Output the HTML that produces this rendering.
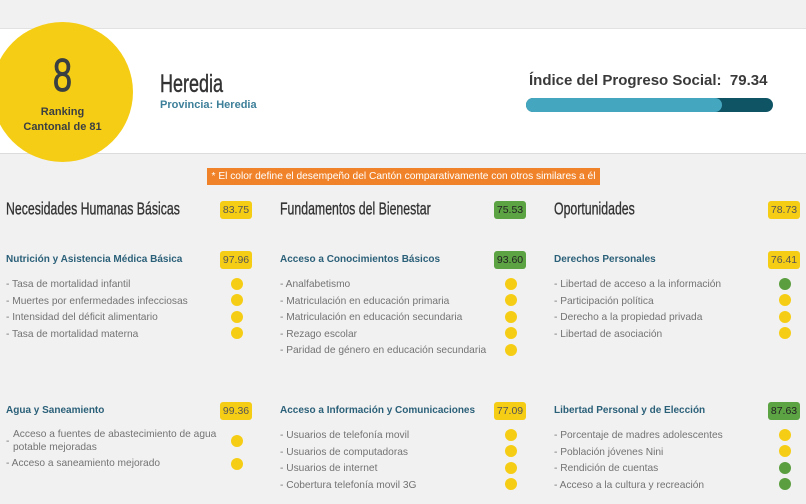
<!DOCTYPE html><html><head><meta charset="utf-8"><style>
*{margin:0;padding:0;box-sizing:border-box}
body{width:806px;height:504px;background:#f1f1f1;font-family:"Liberation Sans",sans-serif;position:relative;overflow:hidden}
.a{position:absolute}
.hdr{left:0;top:28px;width:806px;height:126px;background:#fff;border-top:1px solid #e2e2e2;border-bottom:1px solid #dcdcdc}
.circ{left:-8px;top:22px;width:141px;height:140px;border-radius:50%;background:#f6cd15;text-align:center;color:#3a3f42}
.h2{font-size:16px;color:#333;transform:scale(0.77,1.08);transform-origin:left center;white-space:nowrap;-webkit-text-stroke:0.3px #333}
.b{width:32px;height:18px;border-radius:3px;background:#f6cd15;color:#555;font-size:10.5px;text-align:center;line-height:18px}
.g{background:#5ca344;color:#222}
.st{font-size:10px;font-weight:bold;color:#2b6079}
.it{font-size:10.2px;color:#737373;line-height:16.5px}
.d{width:12px;height:12px;border-radius:50%;background:#f6cd15}
.dg{background:#5b9e3f}
</style></head><body>
<div class="a hdr"></div>
<div class="a circ"><div style="font-size:46px;margin-top:30px;line-height:46px;transform:scaleX(0.75);-webkit-text-stroke:0.8px #3a3f42">8</div><div style="font-size:11px;font-weight:bold;line-height:15px;margin-top:7px">Ranking<br>Cantonal de 81</div></div>
<div class="a" style="left:160px;top:70px;font-size:24px;color:#333;transform:scale(0.75,1.05);transform-origin:left top;-webkit-text-stroke:0.4px #333">Heredia</div>
<div class="a" style="left:160px;top:99px;font-size:11px;font-weight:bold;color:#3d7f99">Provincia: Heredia</div>
<div class="a" style="left:529px;top:72px;font-size:15px;font-weight:bold;color:#3a3a3a">Índice del Progreso Social:&nbsp; 79.34</div>
<div class="a" style="left:526px;top:98px;width:247px;height:14px;border-radius:7px;background:#0e5465"><div style="width:196px;height:14px;border-radius:7px;background:#44a7bf"></div></div>
<div class="a" style="left:207px;top:168px;width:393px;height:17px;background:#f0832a;color:#fff;font-size:10.2px;line-height:17px;text-align:center;white-space:nowrap">* El color define el desempeño del Cantón comparativamente con otros similares a él</div>

<div class="a h2" style="left:6px;top:201px">Necesidades Humanas Básicas</div>
<div class="a b" style="left:220px;top:201px">83.75</div>
<div class="a h2" style="left:280px;top:201px">Fundamentos del Bienestar</div>
<div class="a b g" style="left:494px;top:201px">75.53</div>
<div class="a h2" style="left:554px;top:201px">Oportunidades</div>
<div class="a b" style="left:768px;top:201px">78.73</div>

<div class="a st" style="left:6px;top:254px">Nutrición y Asistencia Médica Básica</div>
<div class="a b" style="left:220px;top:251px">97.96</div>
<div class="a it" style="left:6px;top:277px">- Tasa de mortalidad infantil<br>- Muertes por enfermedades infecciosas<br>- Intensidad del déficit alimentario<br>- Tasa de mortalidad materna</div>
<div class="a d" style="left:231px;top:278px"></div><div class="a d" style="left:231px;top:294px"></div><div class="a d" style="left:231px;top:311px"></div><div class="a d" style="left:231px;top:327px"></div>

<div class="a st" style="left:280px;top:254px">Acceso a Conocimientos Básicos</div>
<div class="a b g" style="left:494px;top:251px">93.60</div>
<div class="a it" style="left:280px;top:277px">- Analfabetismo<br>- Matriculación en educación primaria<br>- Matriculación en educación secundaria<br>- Rezago escolar<br>- Paridad de género en educación secundaria</div>
<div class="a d" style="left:505px;top:278px"></div><div class="a d" style="left:505px;top:294px"></div><div class="a d" style="left:505px;top:311px"></div><div class="a d" style="left:505px;top:327px"></div><div class="a d" style="left:505px;top:344px"></div>

<div class="a st" style="left:554px;top:254px">Derechos Personales</div>
<div class="a b" style="left:768px;top:251px">76.41</div>
<div class="a it" style="left:554px;top:277px">- Libertad de acceso a la información<br>- Participación política<br>- Derecho a la propiedad privada<br>- Libertad de asociación</div>
<div class="a d dg" style="left:779px;top:278px"></div><div class="a d" style="left:779px;top:294px"></div><div class="a d" style="left:779px;top:311px"></div><div class="a d" style="left:779px;top:327px"></div>

<div class="a st" style="left:6px;top:405px">Agua y Saneamiento</div>
<div class="a b" style="left:220px;top:402px">99.36</div>
<div class="a it" style="left:6px;top:434px">-</div>
<div class="a it" style="left:13px;top:428px;line-height:13px;width:210px">Acceso a fuentes de abastecimiento de agua potable mejoradas</div>
<div class="a it" style="left:6px;top:456px">- Acceso a saneamiento mejorado</div>
<div class="a d" style="left:231px;top:435px"></div><div class="a d" style="left:231px;top:458px"></div>

<div class="a st" style="left:280px;top:405px">Acceso a Información y Comunicaciones</div>
<div class="a b" style="left:494px;top:402px">77.09</div>
<div class="a it" style="left:280px;top:428px">- Usuarios de telefonía movil<br>- Usuarios de computadoras<br>- Usuarios de internet<br>- Cobertura telefonía movil 3G</div>
<div class="a d" style="left:505px;top:429px"></div><div class="a d" style="left:505px;top:445px"></div><div class="a d" style="left:505px;top:462px"></div><div class="a d" style="left:505px;top:478px"></div>

<div class="a st" style="left:554px;top:405px">Libertad Personal y de Elección</div>
<div class="a b g" style="left:768px;top:402px">87.63</div>
<div class="a it" style="left:554px;top:428px">- Porcentaje de madres adolescentes<br>- Población jóvenes Nini<br>- Rendición de cuentas<br>- Acceso a la cultura y recreación</div>
<div class="a d" style="left:779px;top:429px"></div><div class="a d" style="left:779px;top:445px"></div><div class="a d dg" style="left:779px;top:462px"></div><div class="a d dg" style="left:779px;top:478px"></div>
</body></html>
